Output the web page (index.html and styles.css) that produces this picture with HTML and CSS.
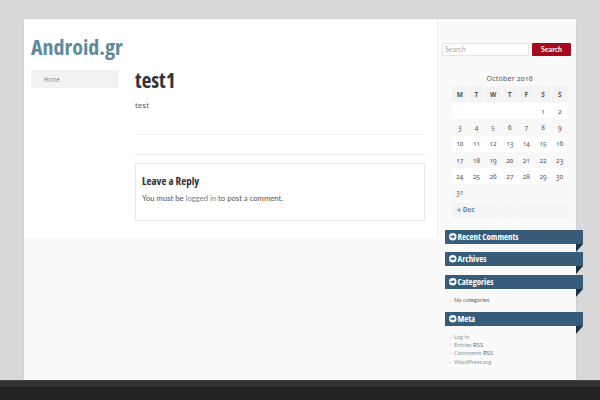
FILE: index.html
```html
<!DOCTYPE html>
<html>
<head>
<title>test1 - Android.gr</title>
<link rel="stylesheet" href="styles.css">
</head>
<body>

<div class="wrapper">
	<div class="main">
		<div class="main_box">
			<div class="left_col">
				<h1 class="site_title">Android.gr</h1>
				<div class="menu_item">Home</div>
			</div>
			<div class="content">
				<h2 class="post_title">test1</h2>
				<p class="post_text">test</p>
				<div class="rule rule_first"></div>
				<div class="rule rule_second"></div>
				<div class="reply_box">
					<h3 class="reply_title">Leave a Reply</h3>
					<p class="reply_text">You must be <a href="#" class="link">logged in</a> to post a comment.</p>
				</div>
			</div>
		</div>
	</div>

	<div class="sidebar">
		<div class="search_row">
			<div class="search_input">Search</div>
			<div class="search_button">Search</div>
		</div>

		<table class="calendar">
			<caption>October 2016</caption>
			<tr class="cal_head"><th>M</th><th>T</th><th>W</th><th>T</th><th>F</th><th>S</th><th>S</th></tr>
			<tr class="cal_white"><td></td><td></td><td></td><td></td><td></td><td>1</td><td>2</td></tr>
			<tr class="cal_grey"><td>3</td><td>4</td><td>5</td><td>6</td><td>7</td><td>8</td><td>9</td></tr>
			<tr class="cal_white"><td>10</td><td>11</td><td>12</td><td>13</td><td>14</td><td>15</td><td>16</td></tr>
			<tr class="cal_grey"><td>17</td><td>18</td><td>19</td><td>20</td><td>21</td><td>22</td><td>23</td></tr>
			<tr class="cal_white"><td>24</td><td>25</td><td>26</td><td>27</td><td>28</td><td>29</td><td>30</td></tr>
			<tr class="cal_grey"><td>31</td><td colspan="6"></td></tr>
			<tr class="cal_foot"><td colspan="3"><a href="#" class="link">&laquo; Dec</a></td><td></td><td colspan="3"></td></tr>
		</table>

		<div class="ribbon"><svg class="ribbon_icon" viewBox="0 0 16 16"><circle cx="8" cy="8" r="8" fill="#fff"/><path d="M3 6.600h5V3.600L13 8l-5 4.400v-3H3z" fill="#375c7a"/></svg>Recent Comments</div>
		<div class="ribbon"><svg class="ribbon_icon" viewBox="0 0 16 16"><circle cx="8" cy="8" r="8" fill="#fff"/><path d="M3 6.600h5V3.600L13 8l-5 4.400v-3H3z" fill="#375c7a"/></svg>Archives</div>
		<div class="ribbon ribbon_cats"><svg class="ribbon_icon" viewBox="0 0 16 16"><circle cx="8" cy="8" r="8" fill="#fff"/><path d="M3 6.600h5V3.600L13 8l-5 4.400v-3H3z" fill="#375c7a"/></svg>Categories</div>
		<ul class="side_list list_cats">
			<li>No categories</li>
		</ul>
		<div class="ribbon"><svg class="ribbon_icon" viewBox="0 0 16 16"><circle cx="8" cy="8" r="8" fill="#fff"/><path d="M3 6.600h5V3.600L13 8l-5 4.400v-3H3z" fill="#375c7a"/></svg>Meta</div>
		<ul class="side_list">
			<li><a href="#" class="link_plain">Log in</a></li>
			<li><a href="#" class="link_plain">Entries</a> RSS</li>
			<li><a href="#" class="link_plain">Comments</a> RSS</li>
			<li><a href="#" class="link_plain">WordPress.org</a></li>
		</ul>
	</div>
</div>

<div class="footer"><div class="footer_top"></div></div>

</body>
</html>
```
FILE: styles.css
```css
html, body { margin: 0; padding: 0; }
body { background-color: #d8d8d8; font-family: "Open Sans", sans-serif; color: #444; overflow: hidden; }

.wrapper { display: grid; grid-template-columns: 414px 138px; margin: 19px 24px 0; height: 361px; background-color: #fafafa; box-shadow: 0 0 3px rgba(0,0,0,0.06); }

.main { background-color: #fafafa; }
.main_box { display: flex; height: 219px; background-color: white; padding-left: 6px; box-sizing: border-box; border-right: 1px solid #eee; border-bottom-right-radius: 3px; }
.left_col { width: 89px; flex: none; }
.site_title { margin: 12px 0 0 1px; font-size: 22px; line-height: 30px; font-weight: 700; font-stretch: 75%; color: #5f8a9c; }
.menu_item { margin: 9px 0 0 1px; height: 18px; line-height: 18px; padding-left: 13px; background-color: #f2f2f2; font-size: 8px; font-weight: 300; font-stretch: 75%; color: #666; }

.content { width: 290px; margin-left: 16px; }
.post_title { margin: 48px 0 0; font-size: 21px; line-height: 26px; font-weight: 700; font-stretch: 75%; color: #333; }
.post_text { margin: 6px 0 0; font-size: 8px; line-height: 11px; color: #555; }
.rule { height: 1px; background-color: #eee; }
.rule_first { margin-top: 24px; }
.rule_second { margin-top: 19px; }
.reply_box { margin-top: 8px; height: 58px; box-sizing: border-box; border: 1px solid #e8e8e8; padding: 9px 6px; }
.reply_title { margin: 0; font-size: 11px; line-height: 16px; font-weight: 700; font-stretch: 75%; color: #333; }
.reply_text { margin: 3px 0 0; font-family: Lato, sans-serif; font-size: 7.7px; line-height: 12px; color: #555; }
.link { color: #5f8a9c; text-decoration: none; }
.link_plain { color: #8a9aa2; text-decoration: none; }

.sidebar { padding: 24px 5px 0 4px; font-size: 7px; font-family: Lato, sans-serif; }
.search_row { display: flex; justify-content: space-between; height: 13px; }
.search_input { width: 87px; box-sizing: border-box; border: 1px solid #e6e6e6; background-color: white; line-height: 11px; padding-left: 2px; font-size: 7px; color: #aaa; }
.search_button { width: 39px; background-color: #a50a1c; color: white; font-weight: 700; font-size: 7px; line-height: 13px; text-align: center; border-radius: 1px; }

.calendar { width: 117.5px; margin: 15px 0 0 9px; border-collapse: collapse; table-layout: fixed; font-family: "Noto Sans", sans-serif; font-feature-settings: "onum"; font-size: 6.5px; color: #555; }
.calendar caption { font-size: 7px; line-height: 15px; height: 14px; color: #555; letter-spacing: 0.2px; }
.calendar th { height: 16px; padding: 0; font-weight: 700; font-size: 6.5px; background-color: #f3f3f3; border: 1px solid #fafafa; }
.calendar td { height: 16.3px; padding: 0; text-align: center; }
.cal_white td { background-color: white; }
.cal_grey td { background-color: #f8f8f8; }
.cal_foot td { background-color: #f5f5f5; text-align: left; padding-left: 5px; border: 1px solid #fafafa; font-weight: 700; }

.ribbon { position: relative; width: 138px; height: 14px; margin: 8px 0 0 3px; line-height: 14px; background-color: #375c7a; color: white; font-family: "Open Sans", sans-serif; font-size: 8.8px; font-weight: 700; font-stretch: 75%; box-sizing: border-box; padding-left: 4px; display: flex; align-items: center; }
.ribbon::after { content: ""; position: absolute; right: 0; top: 14px; border-top: 8px solid #1c3346; border-right: 7px solid transparent; }
.calendar + .ribbon { margin-top: 11px; }
.ribbon_cats { margin-top: 9px; }
.ribbon_icon { width: 7.5px; height: 7.5px; margin-right: 1px; flex: none; }

.side_list { margin: 0; padding: 7px 0 0 6.5px; list-style: none; font-size: 5.8px; line-height: 8.2px; color: #666; }
.side_list li::before { content: "\2013"; display: inline-block; width: 5.5px; color: #aaa; }
.list_cats { padding-top: 7px; height: 16px; }
.list_cats + .ribbon { margin-top: 0; }

.footer { height: 20px; background-color: #222; }
.footer_top { height: 7px; box-sizing: border-box; background-color: #333; border-top: 1px solid #444; }
```
